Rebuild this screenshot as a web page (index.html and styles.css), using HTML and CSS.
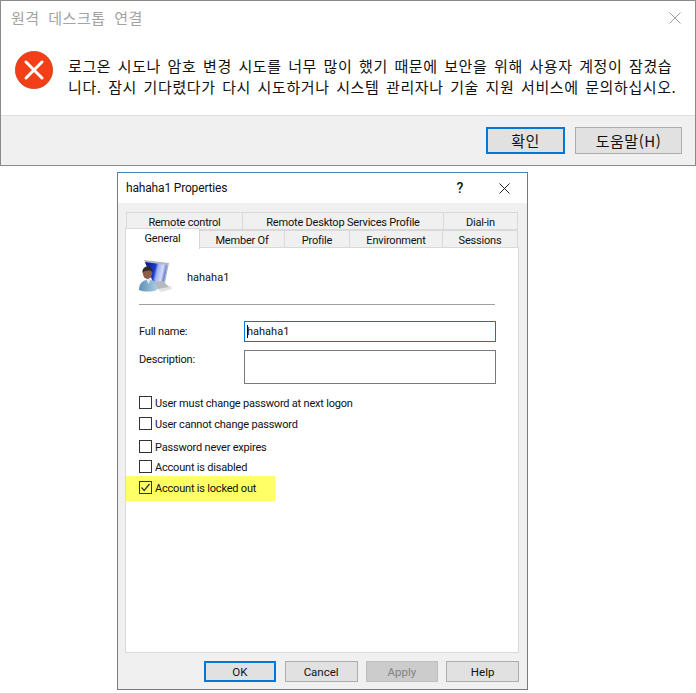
FILE: index.html
```html
<!DOCTYPE html>
<html lang="ko">
<head>
<meta charset="utf-8">
<title>Remote desktop</title>
<link rel="stylesheet" href="styles.css">
</head>
<body>
<section class="alert">
  <header class="alert-title">
    <span class="alert-caption">원격 데스크톱 연결</span>
    <svg class="alert-close" width="12" height="12" viewBox="0 0 12 12"><path d="M0.5 0.5L11.5 11.5M11.5 0.5L0.5 11.5" stroke="#a0a0a0" stroke-width="1" fill="none"/></svg>
  </header>
  <div class="alert-body">
    <svg class="alert-icon" width="38" height="38" viewBox="0 0 38 38">
      <circle cx="19" cy="19" r="18.6" fill="#f33f17" stroke="#c9411f" stroke-width="0.8"/>
      <path d="M11 11L27 27M27 11L11 27" stroke="#fff" stroke-width="3" stroke-linecap="round" fill="none"/>
    </svg>
    <p class="alert-text">로그온 시도나 암호 변경 시도를 너무 많이 했기 때문에 보안을 위해 사용자 계정이 잠겼습<br>니다. 잠시 기다렸다가 다시 시도하거나 시스템 관리자나 기술 지원 서비스에 문의하십시오.</p>
  </div>
  <footer class="alert-foot">
    <button class="kbtn kbtn-default">확인</button>
    <button class="kbtn">도움말(H)</button>
  </footer>
</section>

<section class="props">
  <header class="props-title">
    <span class="props-caption">hahaha1 Properties</span>
    <span class="props-help">?</span>
    <svg class="props-close" width="11" height="11" viewBox="0 0 11 11"><path d="M0.5 0.5L10.5 10.5M10.5 0.5L0.5 10.5" stroke="#222" stroke-width="1" fill="none"/></svg>
  </header>
  <div class="props-body">
    <div class="tabs tabs-back">
      <span class="tab tab-rc">Remote control</span>
      <span class="tab tab-rds">Remote Desktop Services Profile</span>
      <span class="tab tab-dial">Dial-in</span>
    </div>
    <div class="tabs tabs-front">
      <span class="tab tab-general">General</span>
      <span class="tab tab-member">Member Of</span>
      <span class="tab tab-profile">Profile</span>
      <span class="tab tab-env">Environment</span>
      <span class="tab tab-sess">Sessions</span>
    </div>
    <div class="panel">
      <div class="user-head">
        <svg class="user-icon" width="34" height="34" viewBox="0 0 34 34">
          <defs>
            <linearGradient id="scr" x1="0" y1="0" x2="1" y2="0.2">
              <stop offset="0" stop-color="#06148c"/>
              <stop offset="0.5" stop-color="#1c3cc8"/>
              <stop offset="0.62" stop-color="#9fb2ee"/>
              <stop offset="0.85" stop-color="#d4dcf6"/>
              <stop offset="1" stop-color="#5f79d8"/>
            </linearGradient>
            <linearGradient id="shirt" x1="0" y1="0" x2="1" y2="0">
              <stop offset="0" stop-color="#5f8fb4"/>
              <stop offset="1" stop-color="#a9cde3"/>
            </linearGradient>
          </defs>
          <path d="M17 28L32 26L33 29L22 32Z" fill="#e2e2e2"/>
          <path d="M5 0L30 3L26 23L30 27L18 29L14 23Z" fill="#b4b8bf"/>
          <path d="M6 2L28 5L25 21L14 22Z" fill="url(#scr)"/>
          <path d="M0 30C0 24 3 21 7 20L12 20C16 21 18 25 18 30C13 32 5 32 0 30Z" fill="url(#shirt)"/>
          <path d="M7 19L12 19L9.500 24Z" fill="#dfe9f1"/>
          <ellipse cx="8.500" cy="13" rx="4.700" ry="6" fill="#8a5f45"/>
          <path d="M3.500 13C3 8 6 6.500 9 6.500C12 6.500 14 9 13.500 12C11 10 6 10 3.500 13Z" fill="#2e2a28"/>
        </svg>
        <span class="user-name">hahaha1</span>
      </div>
      <hr class="rule">
      <div class="field field-name">
        <label class="field-label">Full name:</label>
        <div class="input input-focus"><span class="caret"></span>hahaha1</div>
      </div>
      <div class="field field-desc">
        <label class="field-label">Description:</label>
        <div class="input input-tall"></div>
      </div>
      <ul class="checks">
        <li class="check check-1"><span class="box"></span><span class="check-text">User must change password at next logon</span></li>
        <li class="check check-2"><span class="box"></span><span class="check-text">User cannot change password</span></li>
        <li class="check check-3"><span class="box"></span><span class="check-text">Password never expires</span></li>
        <li class="check check-4"><span class="box"></span><span class="check-text">Account is disabled</span></li>
        <li class="check check-5"><span class="box"><svg width="11" height="11" viewBox="0 0 11 11"><path d="M1.500 5.500L4.200 8.500L9.500 2" stroke="#333" stroke-width="1.200" fill="none"/></svg></span><span class="check-text">Account is locked out</span></li>
      </ul>
    </div>
    <footer class="props-foot">
      <button class="btn btn-default">OK</button>
      <button class="btn">Cancel</button>
      <button class="btn btn-off">Apply</button>
      <button class="btn">Help</button>
    </footer>
  </div>
</section>
</body>
</html>
```

FILE: styles.css
```css
* { box-sizing: border-box; }
html, body { margin: 0; padding: 0; background: #fff; }
body {
  width: 696px;
  height: 693px;
  overflow: hidden;
  font-family: Roboto, "Noto Sans CJK KR", sans-serif;
  color: #111;
}

/* Korean alert */
.alert {
  height: 166px;
  border: 1px solid #8a8a8a;
  display: flex;
  flex-direction: column;
  font-family: "Noto Sans CJK KR", sans-serif;
}
.alert-title {
  height: 33px;
  padding: 0 14px 0 10px;
  display: flex;
  align-items: center;
  justify-content: space-between;
}
.alert-caption { font-size: 15px; color: #a3a3a3; letter-spacing: 0.5px; word-spacing: 4px; }
.alert-body {
  flex: 1;
  display: flex;
  padding: 17px 0 0 14px;
}
.alert-icon { flex: none; }
.alert-text {
  margin: 4px 0 0 15px;
  font-size: 15px;
  letter-spacing: 0.6px;
  word-spacing: 1.8px;
  line-height: 21px;
  white-space: nowrap;
  color: #111;
}
.alert-foot {
  height: 50px;
  background: #f0f0f0;
  border-top: 1px solid #dfdfdf;
  padding: 11px 13px 0 0;
  display: flex;
  justify-content: flex-end;
  align-items: flex-start;
  gap: 10px;
}
.kbtn {
  height: 27px;
  width: 107px;
  border: 1px solid #adadad;
  background: #e1e1e1;
  font: 15px "Noto Sans CJK KR", sans-serif;
  letter-spacing: 0.5px;
  color: #111;
  padding: 0;
}
.kbtn-default { width: 79px; border: 2px solid #0078d7; }

/* Properties */
.props {
  width: 411px;
  height: 518px;
  margin: 6px 0 0 117px;
  border: 1px solid #7a7a7a;
  border-top-color: #3f87bd;
  background: #f0f0f0;
  display: flex;
  flex-direction: column;
  font-size: 11px;
  letter-spacing: -0.2px;
}
.props-title {
  height: 30px;
  flex: none;
  background: #fff;
  display: flex;
  align-items: center;
  padding: 0 17px 0 8px;
}
.props-caption { flex: 1; font-size: 12px; letter-spacing: -0.17px; }
.props-help { font-size: 14px; font-weight: 500; margin-right: 36px; }
.props-body { flex: 1; padding: 9px 8px 0 7px; display: flex; flex-direction: column; }
.tabs { display: flex; }
.tab {
  display: flex;
  justify-content: center;
  align-items: center;
  background: #f0f0f0;
  border: 1px solid #d9d9d9;
  margin-left: -1px;
  padding-top: 2px;
  font-size: 11px;
  white-space: nowrap;
}
.tabs-back { height: 18px; padding-left: 2px; }
.tabs-front { height: 18px; padding-left: 1px; position: relative; z-index: 1; }
.tab-rc { width: 117px; }
.tab-rds { width: 202px; }
.tab-dial { width: 75px; }
.tab-general { width: 75px; height: 21px; margin-top: -2px; background: #fff; border-bottom: 0; padding: 0 0 2px; }
.tab-member { width: 86px; }
.tab-profile { width: 66px; }
.tab-env { width: 94px; }
.tab-sess { width: 76px; }

.panel {
  width: 394px;
  height: 406px;
  background: #fff;
  border: 1px solid #d9d9d9;
  margin-top: -1px;
  padding: 13px 22px 0 13px;
}
.user-head { display: flex; align-items: center; height: 32px; gap: 14px; }
.user-icon { flex: none; filter: blur(0.35px); }
.user-name { letter-spacing: 0; }
.rule { margin: 11px 1px 0 0; border: 0; height: 1px; background: #a0a0a0; }
.field { display: flex; justify-content: space-between; }
.field-name { margin-top: 16px; align-items: center; }
.field-desc { margin-top: 8px; align-items: flex-start; }
.field-label { line-height: 18px; }
.field-desc .field-label { padding-top: 1px; }
.input {
  width: 252px;
  height: 21px;
  border: 1px solid #7a7a7a;
  background: #fff;
  padding-left: 2px;
  line-height: 19px;
  letter-spacing: 0;
}
.input-focus { border-color: #0078d7; }
.caret {
  display: inline-block;
  width: 1px;
  height: 13px;
  margin-right: -1px;
  background: #111;
  vertical-align: -3px;
}
.input-tall { height: 34px; }
.checks { list-style: none; margin: 12px 0 0 0; padding: 0; }
.check { display: flex; align-items: center; height: 13px; white-space: nowrap; }
.check-text { position: relative; top: 1px; }
.check-2 { margin-top: 8px; }
.check-3 { margin-top: 10px; }
.check-4 { margin-top: 7px; }
.check-5 { margin-top: 8px; position: relative; z-index: 0; }
.check-5::before {
  content: "";
  position: absolute;
  left: -13px;
  top: -5px;
  width: 149px;
  height: 25px;
  background: #ffff66;
  z-index: -1;
}
.box {
  flex: none;
  width: 13px;
  height: 13px;
  border: 1px solid #333;
  background: #fff;
  margin-right: 3px;
  display: flex;
}
.check-5 .box { background: transparent; }
.props-foot {
  display: flex;
  gap: 8px;
  padding: 8px 0 0 79px;
}
.btn {
  width: 73px;
  height: 21px;
  padding: 0;
  border: 1px solid #adadad;
  background: #e1e1e1;
  color: #111;
  font: 11.500px Roboto, sans-serif;
}
.btn-default { border: 2px solid #0078d7; width: 72px; margin-right: 1px; }
.btn-off { background: #cccccc; border-color: #bfbfbf; color: #838383; }
```
